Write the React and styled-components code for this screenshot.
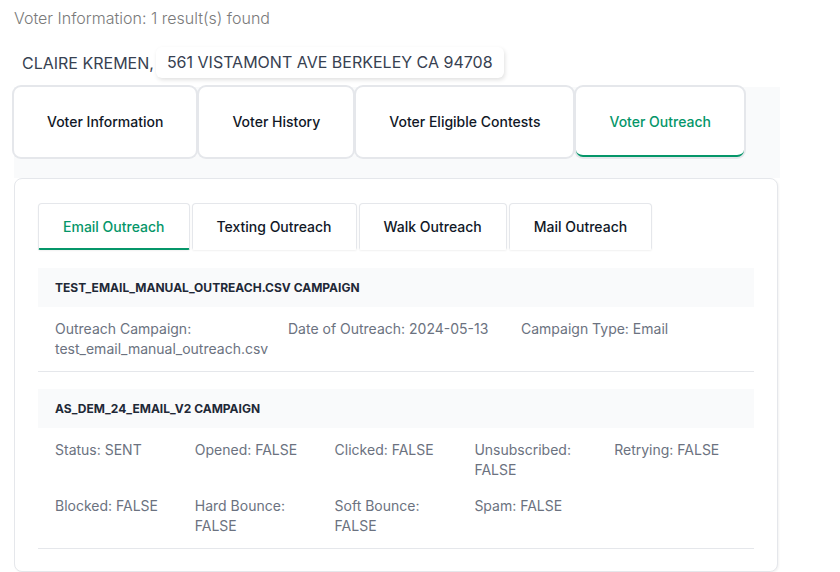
import React from "react"
import styled, { createGlobalStyle } from "styled-components"

const GlobalStyle = createGlobalStyle`
  body {
    margin: 0;
    background: #ffffff;
    font-family: Inter, "Noto Sans", sans-serif;
  }
`

const topTabs = ["Voter Information", "Voter History", "Voter Eligible Contests", "Voter Outreach"]
const innerTabs = ["Email Outreach", "Texting Outreach", "Walk Outreach", "Mail Outreach"]

const campaigns = [
  {
    id: 0,
    title: "test_email_manual_outreach.csv Campaign",
    cols: 3,
    fields: [
      "Outreach Campaign: test_email_manual_outreach.csv",
      "Date of Outreach: 2024-05-13",
      "Campaign Type: Email",
    ],
  },
  {
    id: 1,
    title: "as_dem_24_email_v2 Campaign",
    cols: 5,
    fields: [
      "Status: SENT",
      "Opened: FALSE",
      "Clicked: FALSE",
      "Unsubscribed: FALSE",
      "Retrying: FALSE",
      "Blocked: FALSE",
      "Hard Bounce: FALSE",
      "Soft Bounce: FALSE",
      "Spam: FALSE",
    ],
  },
]

const App = () => {
  return (
    <Page>
      <GlobalStyle />
      <Title>Voter Information: 1 result(s) found</Title>
      <NameRow>
        <Name>CLAIRE KREMEN,</Name>
        <Address>561 VISTAMONT AVE BERKELEY CA 94708</Address>
      </NameRow>
      <TopTabList>
        {topTabs.map(t => (
          <TopTab key={t} $active={t === "Voter Outreach"}>
            {t}
          </TopTab>
        ))}
      </TopTabList>
      <Card>
        <InnerTabList>
          {innerTabs.map(t => (
            <InnerTab key={t} $active={t === "Email Outreach"}>
              {t}
            </InnerTab>
          ))}
        </InnerTabList>
        {campaigns.map(c => (
          <Campaign key={c.id}>
            <CampaignHeader>{c.title}</CampaignHeader>
            <Fields $cols={c.cols}>
              {c.fields.map(f => (
                <Field key={f}>{f}</Field>
              ))}
            </Fields>
          </Campaign>
        ))}
      </Card>
    </Page>
  )
}

const Page = styled.div`
  padding: 7px 0 0 14px;
  width: 766px;
`

const Title = styled.div`
  font-size: 16px;
  font-weight: 300;
  line-height: 22px;
  color: #7a7a7a;
`

const NameRow = styled.div`
  display: flex;
  align-items: center;
  margin-top: 18px;
  padding-left: 8px;
  height: 31px;
`

const Name = styled.span`
  font-size: 16px;
  color: #374151;
  margin-right: 2px;
`

const Address = styled.span`
  font-size: 16px;
  color: #374151;
  padding: 0 11px;
  height: 31px;
  line-height: 31px;
  border-radius: 6px;
  background: #ffffff;
  box-shadow: 1px 2px 4px rgba(0, 0, 0, 0.12);
`

const TopTabList = styled.div`
  display: flex;
  gap: 3px;
  margin-top: 9px;
  padding-bottom: 21px;
  background: #f9fafb;
`

const TopTab = styled.div`
  height: 70px;
  display: flex;
  align-items: center;
  padding: 0 33px;
  box-sizing: border-box;
  font-size: 14px;
  font-weight: 500;
  color: ${p => (p.$active ? "#059669" : "#111827")};
  background: #ffffff;
  border-radius: 7px;
  box-shadow: 0 0 0 2px #e5e7eb;
  border-bottom: 2px solid ${p => (p.$active ? "#059669" : "transparent")};
`

const Card = styled.div`
  width: 764px;
  box-sizing: border-box;
  border: 1px solid #e5e7eb;
  border-radius: 8px;
  padding: 24px 23px 22px;
  background: #ffffff;
  box-shadow: 1px 1px 2px rgba(0, 0, 0, 0.05);
`

const InnerTabList = styled.div`
  display: flex;
  gap: 2px;
  margin-bottom: 18px;
`

const InnerTab = styled.div`
  height: 47px;
  display: flex;
  align-items: center;
  padding: 0 24px;
  box-sizing: border-box;
  font-size: 14px;
  font-weight: 500;
  color: ${p => (p.$active ? "#059669" : "#111827")};
  background: #ffffff;
  border: 1px solid #e5e7eb;
  border-bottom: 2px solid ${p => (p.$active ? "#059669" : "transparent")};
  border-radius: 4px 4px 2px 2px;
  box-shadow: 0 1px 2px rgba(0, 0, 0, 0.06);
`

const Campaign = styled.div`
  border-bottom: 1px solid #e5e7eb;
  margin-bottom: 17px;
  &:last-child {
    margin-bottom: 0;
  }
`

const CampaignHeader = styled.div`
  height: 39px;
  display: flex;
  align-items: center;
  padding-left: 17px;
  background: #f9fafb;
  font-size: 12px;
  font-weight: 700;
  text-transform: uppercase;
  color: #1f2937;
`

const Fields = styled.div`
  display: grid;
  grid-template-columns: repeat(${p => p.$cols}, 1fr);
  row-gap: 16px;
  padding: 12px 0 12px 17px;
`

const Field = styled.div`
  font-size: 14px;
  line-height: 20px;
  color: #6b7280;
  padding-right: 12px;
`

export default App
